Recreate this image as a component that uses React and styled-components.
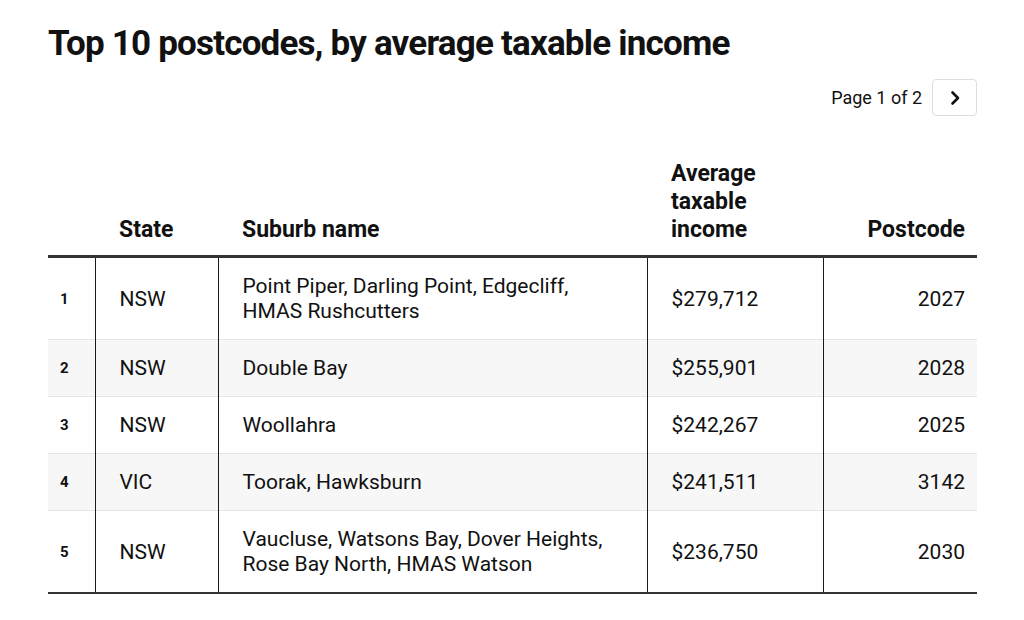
import styled, { createGlobalStyle } from "styled-components";

const GlobalStyle = createGlobalStyle`
  body {
    margin: 0;
    background: #fff;
    font-family: Roboto, "Liberation Sans", sans-serif;
    color: #111;
  }
`;

const Page = styled.div`
  width: 1024px;
  padding: 22px 47px 0 48px;
  box-sizing: border-box;
`;

const Title = styled.h1`
  margin: 0;
  font-size: 35px;
  line-height: 44px;
  font-weight: 700;
  letter-spacing: -0.8px;
`;

const Pager = styled.div`
  display: flex;
  justify-content: flex-end;
  align-items: center;
  gap: 10px;
  margin-top: 13px;
  font-size: 18px;
`;

const PagerButton = styled.button`
  width: 45px;
  height: 37px;
  display: flex;
  align-items: center;
  justify-content: center;
  background: #fff;
  border: 1px solid #ddd;
  border-radius: 4px;
  padding: 0;
  cursor: pointer;
`;

const Table = styled.table`
  width: 929px;
  margin-top: 44px;
  border-collapse: collapse;
  table-layout: fixed;
  border-bottom: 2px solid #333;
`;

const HeadCell = styled.th`
  font-size: 23px;
  line-height: 28px;
  font-weight: 700;
  text-align: ${(p) => (p.$right ? "right" : "left")};
  vertical-align: bottom;
  padding: 0 ${(p) => (p.$right ? "12px" : "24px")} 11px 24px;
  border-bottom: 3px solid #333;
`;

const Row = styled.tr`
  background: ${(p) => (p.$alt ? "#f7f7f7" : "#fff")};
  border-top: 1px solid #e4e4e4;
`;

const Cell = styled.td`
  font-size: 21px;
  line-height: 25px;
  padding: 16px ${(p) => (p.$right ? "12px" : "24px")} 15px 24px;
  text-align: ${(p) => (p.$right ? "right" : "left")};
  border-left: ${(p) => (p.$first ? "none" : "1px solid #1a1a1a")};
  border-right: ${(p) => (p.$right ? "none" : "1px solid #1a1a1a")};
`;

const RankCell = styled(Cell)`
  font-size: 15px;
  font-weight: 700;
  padding-left: 12px;
  padding-right: 0;
`;

const rows = [
  ["NSW", "Point Piper, Darling Point, Edgecliff, HMAS Rushcutters", "$279,712", "2027"],
  ["NSW", "Double Bay", "$255,901", "2028"],
  ["NSW", "Woollahra", "$242,267", "2025"],
  ["VIC", "Toorak, Hawksburn", "$241,511", "3142"],
  ["NSW", "Vaucluse, Watsons Bay, Dover Heights, Rose Bay North, HMAS Watson", "$236,750", "2030"],
];

export default function App() {
  return (
    <Page>
      <GlobalStyle />
      <Title>Top 10 postcodes, by average taxable income</Title>
      <Pager>
        <span>Page 1 of 2</span>
        <PagerButton aria-label="Next page">
          <svg width="24" height="24" viewBox="0 0 24 24" fill="none" stroke="#111" strokeWidth="2.6" strokeLinecap="round" strokeLinejoin="round">
            <path d="M9.5 6.5l5.5 5.5-5.5 5.5" />
          </svg>
        </PagerButton>
      </Pager>
      <Table>
        <colgroup>
          <col style={{ width: 47 }} />
          <col style={{ width: 123 }} />
          <col style={{ width: 429 }} />
          <col style={{ width: 176 }} />
          <col style={{ width: 154 }} />
        </colgroup>
        <thead>
          <tr>
            <HeadCell />
            <HeadCell>State</HeadCell>
            <HeadCell>Suburb name</HeadCell>
            <HeadCell>
              Average
              <br />
              taxable
              <br />
              income
            </HeadCell>
            <HeadCell $right>Postcode</HeadCell>
          </tr>
        </thead>
        <tbody>
          {rows.map((r, i) => (
            <Row key={i} $alt={i % 2 === 1}>
              <RankCell $first>{i + 1}</RankCell>
              <Cell>{r[0]}</Cell>
              <Cell>{r[1]}</Cell>
              <Cell>{r[2]}</Cell>
              <Cell $right>{r[3]}</Cell>
            </Row>
          ))}
        </tbody>
      </Table>
    </Page>
  );
}
